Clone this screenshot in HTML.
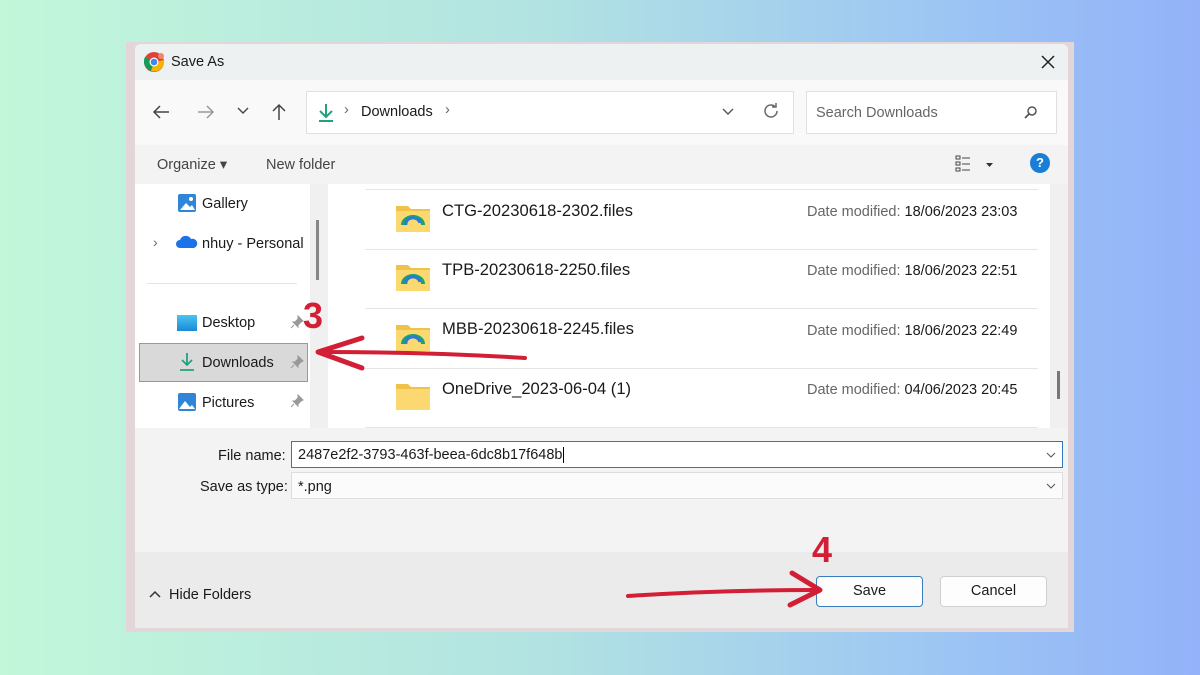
<!DOCTYPE html>
<html><head><meta charset="utf-8"><style>
*{margin:0;padding:0;box-sizing:border-box}
body{width:1200px;height:675px;overflow:hidden;background:linear-gradient(90deg,#c2f7da 0%,#b2e3e2 45%,#9cc4f4 80%,#93b2f9 100%);font-family:"Liberation Sans",sans-serif;position:relative;color:#1a1a1a}
.a{position:absolute}
.frame{left:126px;top:42px;width:948px;height:590px;background:#e3d6d8}
.dlg{left:135px;top:44px;width:933px;height:584px;background:#f3f3f3;overflow:hidden;border-radius:6px 6px 0 0}
.t{font-size:14.5px}
.gray{color:#666}
</style></head><body>
<div class="a frame"></div>
<div class="a dlg">
 <div class="a" style="left:0;top:0;width:933px;height:36px;background:#eef1f1"></div>
 <svg class="a" style="left:8px;top:7px" width="22" height="22" viewBox="0 0 22 22"><circle cx="11" cy="11" r="10" fill="#db4437"/><path d="M11 11L2 6A10 10 0 0 0 8 20Z" fill="#0f9d58"/><path d="M11 11L8 20A10 10 0 0 0 21 9Z" fill="#f4b400"/><circle cx="11" cy="11" r="4.5" fill="#fff"/><circle cx="11" cy="11" r="3.3" fill="#4285f4"/><circle cx="18" cy="5" r="3" fill="#f2876a"/></svg>
 <div class="a t" style="left:36px;top:10px">Save As</div>
 <svg class="a" style="left:906px;top:11px" width="14" height="14"><path d="M1 1l12 12M13 1L1 13" stroke="#222" stroke-width="1.5"/></svg>
 <div class="a" style="left:0;top:36px;width:933px;height:65px;background:#f9f9f9"></div>
 <svg class="a" style="left:17px;top:60px" width="18" height="16"><path d="M17 8H2M8 2L2 8l6 6" stroke="#444" fill="none" stroke-width="1.5"/></svg>
 <svg class="a" style="left:62px;top:60px" width="18" height="16"><path d="M1 8h15M10 2l6 6-6 6" stroke="#999" fill="none" stroke-width="1.5"/></svg>
 <svg class="a" style="left:101px;top:62px" width="14" height="10"><path d="M2 2l5 5 5-5" stroke="#444" fill="none" stroke-width="1.4"/></svg>
 <svg class="a" style="left:136px;top:59px" width="16" height="18"><path d="M8 17V2M2 8l6-6 6 6" stroke="#444" fill="none" stroke-width="1.5"/></svg>
 <div class="a" style="left:171px;top:47px;width:488px;height:43px;background:#fff;border:1px solid #e0e0e0"></div>
 <svg class="a" style="left:182px;top:58px" width="18" height="22"><path d="M9 2v13M3 9l6 6 6-6M2 19h14" stroke="#1fa37f" fill="none" stroke-width="2"/></svg>
 <div class="a t gray" style="left:209px;top:58px">›</div>
 <div class="a t" style="left:226px;top:60px">Downloads</div>
 <div class="a t gray" style="left:310px;top:58px">›</div>
 <svg class="a" style="left:586px;top:63px" width="14" height="10"><path d="M2 2l5 5 5-5" stroke="#555" fill="none" stroke-width="1.4"/></svg>
 <svg class="a" style="left:627px;top:58px" width="18" height="18"><path d="M15 9a6 6 0 1 1-2-4.5" stroke="#666" fill="none" stroke-width="1.5"/><path d="M14 1v4h-4" stroke="#666" fill="none" stroke-width="1.5"/></svg>
 <div class="a" style="left:671px;top:47px;width:251px;height:43px;background:#fff;border:1px solid #e0e0e0"></div>
 <div class="a t gray" style="left:681px;top:61px">Search Downloads</div>
 <svg class="a" style="left:888px;top:61px" width="16" height="16"><circle cx="9" cy="6" r="4" stroke="#555" fill="none" stroke-width="1.5"/><path d="M6 9l-4 4" stroke="#555" stroke-width="1.8"/></svg>
 <div class="a t" style="left:22px;top:113px;color:#444">Organize ▾</div>
 <div class="a t" style="left:131px;top:113px;color:#444">New folder</div>
 <svg class="a" style="left:820px;top:111px" width="40" height="18"><g fill="none" stroke="#444"><rect x="1" y="1" width="4" height="3"/><rect x="1" y="7" width="4" height="3"/><rect x="1" y="13" width="4" height="3"/><path d="M7 3h8M7 9h8M7 15h8"/></g><path d="M31 8h7l-3.5 4z" fill="#333"/></svg>
 <div class="a" style="left:895px;top:109px;width:20px;height:20px;border-radius:50%;background:#1a7fd4;color:#fff;font-size:13px;font-weight:bold;text-align:center;line-height:20px">?</div>
 <!-- nav pane -->
 <div class="a" style="left:0;top:140px;width:175px;height:244px;background:#fff"></div>
 <div class="a" style="left:175px;top:140px;width:18px;height:244px;background:#f0f0f0"></div>
 <div class="a" style="left:181px;top:176px;width:3px;height:60px;background:#888"></div>
 <svg class="a" style="left:42px;top:149px" width="20" height="20"><rect x="1" y="1" width="18" height="18" rx="2" fill="#2f86d8"/><path d="M3 17l6-7 4 4 2-2 3 5z" fill="#fff"/><circle cx="14" cy="6" r="2" fill="#fff"/></svg>
 <div class="a t" style="left:67px;top:152px">Gallery</div>
 <div class="a gray" style="left:18px;top:190px;font-size:14px">›</div>
 <svg class="a" style="left:41px;top:191px" width="22" height="14"><path d="M4 13a4 4 0 0 1 0-8 6 6 0 0 1 11-1 4.5 4.5 0 0 1 3 9z" fill="#1a73e8"/></svg>
 <div class="a t" style="left:67px;top:192px">nhuy - Personal</div>
 <div class="a" style="left:12px;top:239px;width:150px;height:1px;background:#e5e5e5"></div>
 <div class="a" style="left:42px;top:271px;width:20px;height:16px;background:linear-gradient(#4cc3f0,#1a8ad4)"></div>
 <div class="a t" style="left:67px;top:271px">Desktop</div>
 <svg class="a" style="left:155px;top:271px" width="14" height="14"><path d="M8 1l5 5-2 1-3 3 0 2-5-5 2 0 3-3z M4 10l-3 3" fill="#999" stroke="#999"/></svg>
 <div class="a" style="left:4px;top:299px;width:169px;height:39px;background:#d9d9d9;border:1px solid #999"></div>
 <svg class="a" style="left:43px;top:307px" width="18" height="22"><path d="M9 2v12M4 9l5 5 5-5M2 19h14" stroke="#1fa37f" fill="none" stroke-width="1.8"/></svg>
 <div class="a t" style="left:67px;top:311px">Downloads</div>
 <svg class="a" style="left:155px;top:311px" width="14" height="14"><path d="M8 1l5 5-2 1-3 3 0 2-5-5 2 0 3-3z M4 10l-3 3" fill="#999" stroke="#999"/></svg>
 <svg class="a" style="left:42px;top:348px" width="20" height="20"><rect x="1" y="1" width="18" height="18" rx="2" fill="#2f86d8"/><path d="M2 17l6-8 5 6 2-2 3 4z" fill="#fff"/></svg>
 <div class="a t" style="left:67px;top:351px">Pictures</div>
 <svg class="a" style="left:155px;top:350px" width="14" height="14"><path d="M8 1l5 5-2 1-3 3 0 2-5-5 2 0 3-3z M4 10l-3 3" fill="#999" stroke="#999"/></svg>
 <!-- list -->
 <div class="a" style="left:193px;top:140px;width:722px;height:244px;background:#fff"></div>
 <div class="a" style="left:915px;top:140px;width:18px;height:244px;background:#f0f0f0"></div>
 <div class="a" style="left:922px;top:327px;width:3px;height:28px;background:#777"></div>
 <div class="a" style="left:230px;top:145px;width:673px;height:1px;background:#e5e5e5"></div>
 <div class="a" style="left:230px;top:205px;width:673px;height:1px;background:#e5e5e5"></div>
 <div class="a" style="left:230px;top:264px;width:673px;height:1px;background:#e5e5e5"></div>
 <div class="a" style="left:230px;top:324px;width:673px;height:1px;background:#e5e5e5"></div>
 <div class="a" style="left:230px;top:383px;width:673px;height:1px;background:#e5e5e5"></div>
 <svg class="a" style="left:260px;top:159px" width="36" height="30"><path d="M1 3h12l3 3h19v23H1z" fill="#f0c24a"/><rect x="1" y="8" width="34" height="21" fill="#fbd970"/><path d="M8 22a10 8 0 0 1 20 0" stroke="#1ba36f" stroke-width="4" fill="none"/><path d="M11 22a7 6 0 0 1 14-2" stroke="#2a7ad6" stroke-width="3" fill="none"/></svg>
 <div class="a" style="left:307px;top:157px;font-size:16.6px">CTG-20230618-2302.files</div>
 <div class="a t" style="left:672px;top:160px"><span class="gray">Date modified: </span>18/06/2023 23:03</div>
 <svg class="a" style="left:260px;top:218px" width="36" height="30"><path d="M1 3h12l3 3h19v23H1z" fill="#f0c24a"/><rect x="1" y="8" width="34" height="21" fill="#fbd970"/><path d="M8 22a10 8 0 0 1 20 0" stroke="#1ba36f" stroke-width="4" fill="none"/><path d="M11 22a7 6 0 0 1 14-2" stroke="#2a7ad6" stroke-width="3" fill="none"/></svg>
 <div class="a" style="left:307px;top:216px;font-size:16.6px">TPB-20230618-2250.files</div>
 <div class="a t" style="left:672px;top:219px"><span class="gray">Date modified: </span>18/06/2023 22:51</div>
 <svg class="a" style="left:260px;top:278px" width="36" height="30"><path d="M1 3h12l3 3h19v23H1z" fill="#f0c24a"/><rect x="1" y="8" width="34" height="21" fill="#fbd970"/><path d="M8 22a10 8 0 0 1 20 0" stroke="#1ba36f" stroke-width="4" fill="none"/><path d="M11 22a7 6 0 0 1 14-2" stroke="#2a7ad6" stroke-width="3" fill="none"/></svg>
 <div class="a" style="left:307px;top:275px;font-size:16.6px">MBB-20230618-2245.files</div>
 <div class="a t" style="left:672px;top:279px"><span class="gray">Date modified: </span>18/06/2023 22:49</div>
 <svg class="a" style="left:260px;top:337px" width="36" height="30"><path d="M1 3h12l3 3h19v23H1z" fill="#f0c24a"/><rect x="1" y="8" width="34" height="21" fill="#fbd970"/></svg>
 <div class="a" style="left:307px;top:335px;font-size:16.6px">OneDrive_2023-06-04 (1)</div>
 <div class="a t" style="left:672px;top:338px"><span class="gray">Date modified: </span>04/06/2023 20:45</div>
 <!-- fields -->
 <div class="a t" style="left:83px;top:404px">File name:</div>
 <div class="a" style="left:156px;top:397px;width:772px;height:27px;background:#fff;border:1px solid #2b79c2"></div>
 <div class="a t" style="left:163px;top:403px">2487e2f2-3793-463f-beea-6dc8b17f648b<span style="border-left:1px solid #000;margin-left:1px"></span></div>
 <svg class="a" style="left:910px;top:407px" width="12" height="8"><path d="M2 2l4 4 4-4" stroke="#555" fill="none"/></svg>
 <div class="a t" style="left:65px;top:435px">Save as type:</div>
 <div class="a" style="left:156px;top:428px;width:772px;height:27px;background:#fbfbfb;border:1px solid #ddd"></div>
 <div class="a t" style="left:163px;top:435px">*.png</div>
 <svg class="a" style="left:910px;top:438px" width="12" height="8"><path d="M2 2l4 4 4-4" stroke="#555" fill="none"/></svg>
 <div class="a" style="left:0;top:508px;width:933px;height:76px;background:#ebebeb"></div>
 <svg class="a" style="left:14px;top:546px" width="12" height="8"><path d="M1 7l5-5 5 5" stroke="#333" fill="none" stroke-width="1.5"/></svg>
 <div class="a t" style="left:34px;top:543px">Hide Folders</div>
 <div class="a" style="left:681px;top:532px;width:107px;height:31px;background:#fdfdfd;border:1px solid #3a7cc0;border-radius:4px;font-size:14.5px;text-align:center;line-height:29px">Save</div>
 <div class="a" style="left:805px;top:532px;width:107px;height:31px;background:#fdfdfd;border:1px solid #d0d0d0;border-radius:4px;font-size:14.5px;text-align:center;line-height:29px">Cancel</div>
</div>
<svg class="a" style="left:0;top:0" width="1200" height="675">
 <path d="M525 358Q430 352 322 352" stroke="#d21f35" stroke-width="4" fill="none" stroke-linecap="round"/>
 <path d="M362 338L318 352L362 368" stroke="#d21f35" stroke-width="5" fill="none" stroke-linecap="round" stroke-linejoin="round"/>
 <path d="M628 596Q720 590 815 590" stroke="#d21f35" stroke-width="4" fill="none" stroke-linecap="round"/>
 <path d="M792 573L820 590L790 605" stroke="#d21f35" stroke-width="5" fill="none" stroke-linecap="round" stroke-linejoin="round"/>
 <text x="303" y="328" font-family="Liberation Sans" font-weight="bold" font-size="36" fill="#d21f35">3</text>
 <text x="812" y="562" font-family="Liberation Sans" font-weight="bold" font-size="36" fill="#d21f35">4</text>
</svg>
</body></html>
